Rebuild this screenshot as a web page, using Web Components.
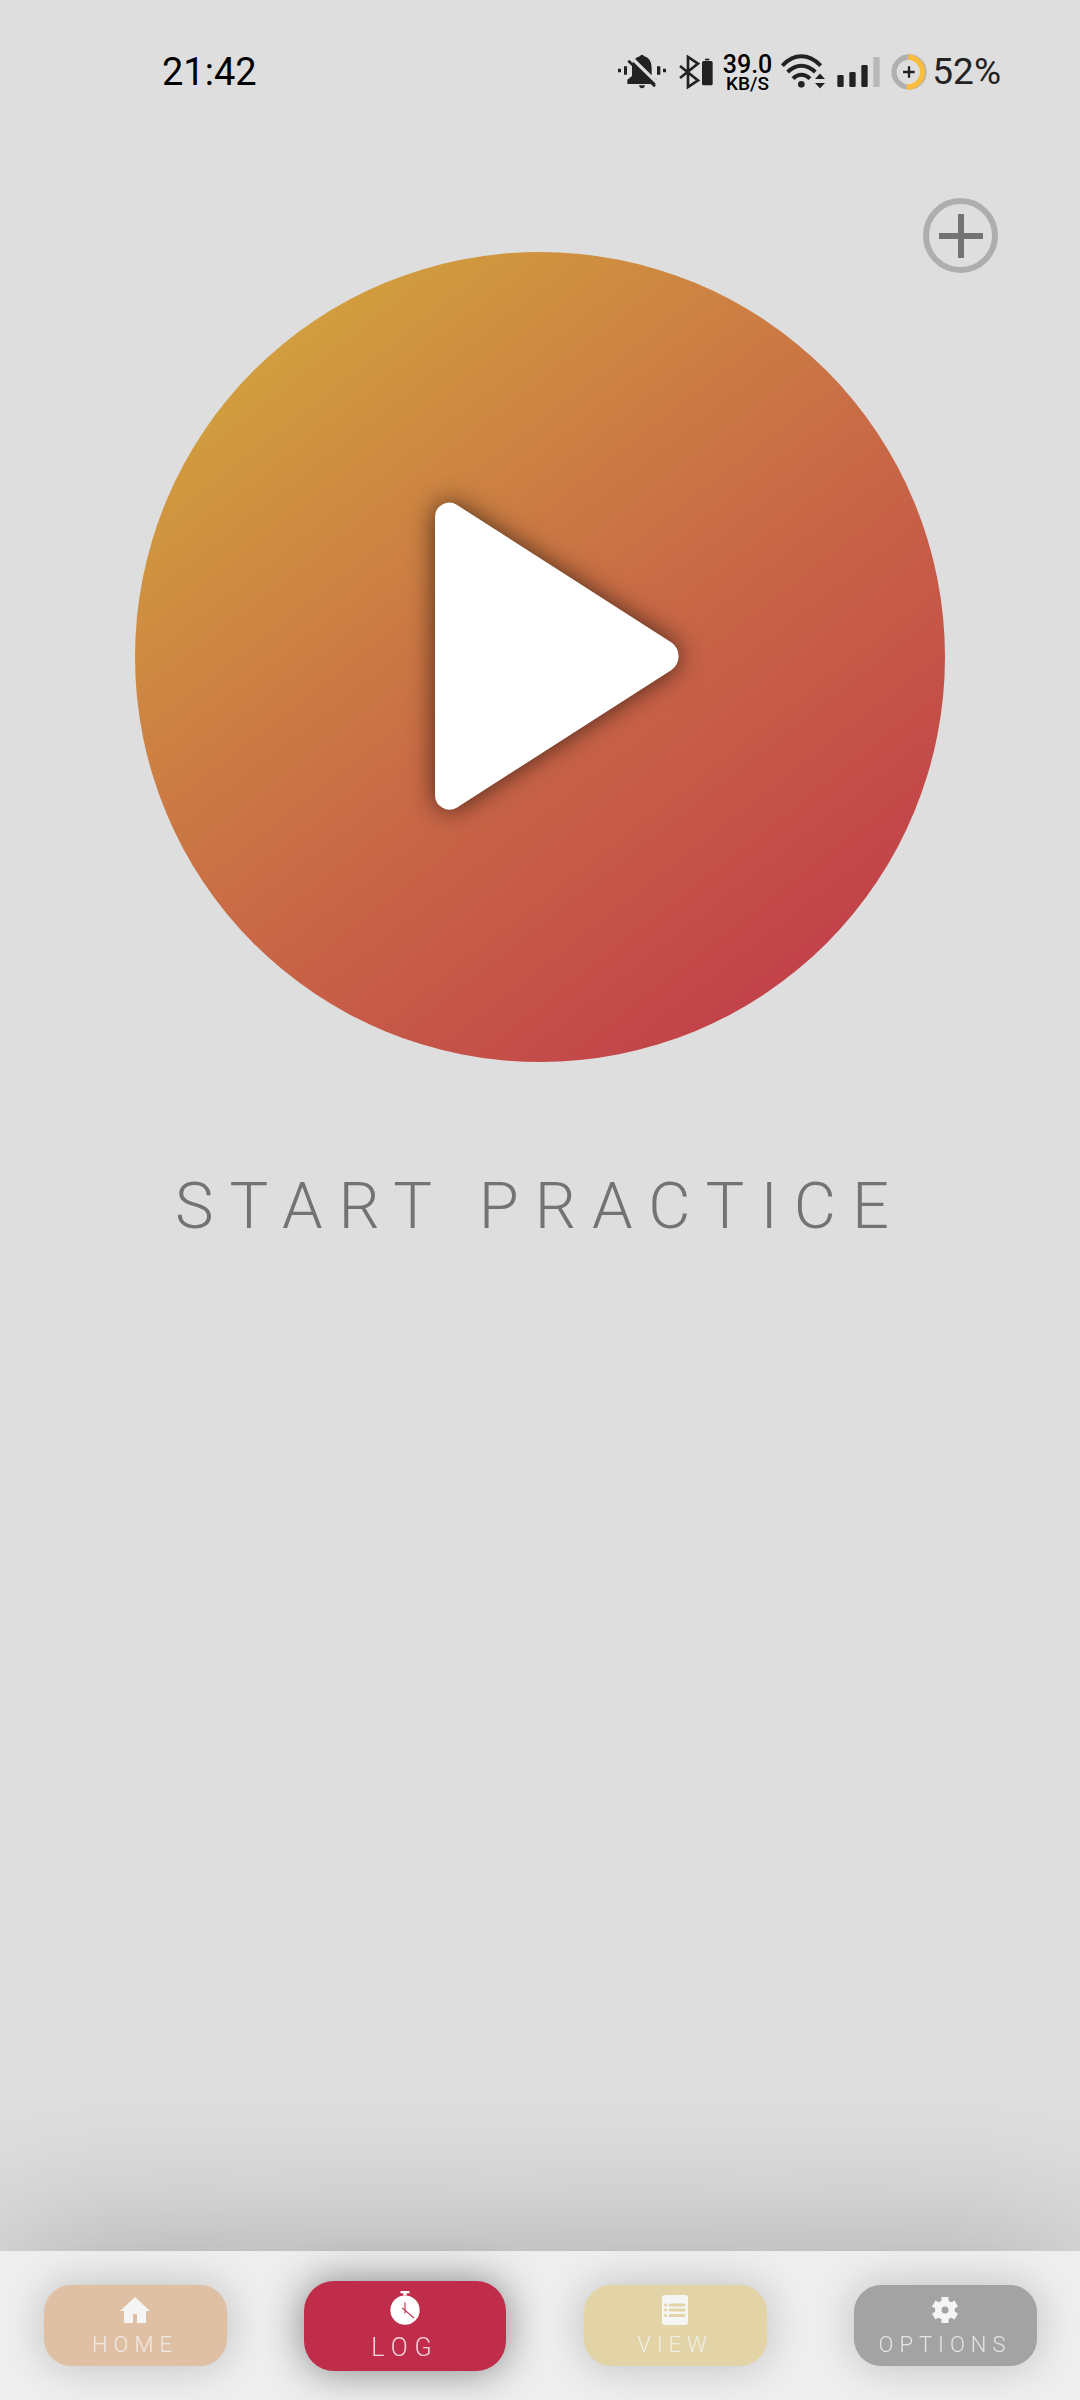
<!DOCTYPE html>
<html lang="en">
<head>
<meta charset="utf-8">
<meta name="viewport" content="width=device-width, initial-scale=1">
<title>Practice Log</title>
<style>
  body { margin: 0; background: #dedede; }
</style>
</head>
<body>
<practice-app></practice-app>

<template id="practice-app">
  <style>
    :host { display: flex; flex-direction: column; min-height: 100vh; background: #dedede; font-family: Roboto, sans-serif; }
    main { flex: 1; position: relative; display: flex; flex-direction: column; align-items: center; padding-top: 152px; }
    add-button { position: absolute; top: 98px; right: 82px; }
    play-button { width: 75%; }
    h1 { margin: 104px 0 0; font-size: 65px; line-height: 80px; font-weight: 300; letter-spacing: 16px; color: #737373; text-align: center; }
  </style>
  <status-bar></status-bar>
  <main>
    <play-button></play-button>
    <add-button></add-button>
    <h1>START PRACTICE</h1>
  </main>
  <tab-bar>
    <tab-item style="--fill:#dfc0a5">
      <svg slot="icon" viewBox="0 0 32 32" width="32" height="32"><path fill="currentColor" d="M16 3 31 17H27V29H18V20H14V29H5V17H1Z"/></svg>HOME</tab-item>
    <tab-item active style="--fill:#c02d4b">
      <svg slot="icon" viewBox="0 0 32 32" width="36" height="36"><path fill="currentColor" d="M12 0H20V2H17.500V4H14.500V2H12Z"/><circle cx="16" cy="17" r="13" fill="currentColor"/><path stroke="#c02d4b" fill="none" d="M16 10V20M13.500 15 24 24"/></svg>LOG</tab-item>
    <tab-item style="--fill:#e2d4a7">
      <svg slot="icon" viewBox="0 0 32 32" width="32" height="32"><rect x="3" y="1" width="26" height="30" rx="3" fill="currentColor"/><path stroke="#e2d4a7" stroke-width="3" stroke-linecap="round" d="M11 11H25M11 16H25M11 21.500H25M6.500 11H6.600M6.500 16H6.600M6.500 21.500H6.600"/></svg>VIEW</tab-item>
    <tab-item style="--fill:#a3a3a3">
      <svg slot="icon" viewBox="0 0 32 32" width="32" height="32"><g fill="currentColor"><circle cx="16" cy="16" r="10"/><path d="M12.500 3H19.500V29H12.500Z"/><path d="M12.500 3H19.500V29H12.500Z" transform="rotate(60 16 16)"/><path d="M12.500 3H19.500V29H12.500Z" transform="rotate(120 16 16)"/></g><circle cx="16" cy="16" r="3.500" fill="#a3a3a3"/></svg>OPTIONS</tab-item>
  </tab-bar>
</template>

<template id="status-bar">
  <style>
    :host { display: flex; align-items: center; justify-content: space-between; box-sizing: border-box; height: 100px; padding: 44px 79px 0 162px; color: #000; }
    time, .level { font-size: 38px; line-height: 58px; }
    .level { font-size: 37px; color: #222; margin-left: 5px; }
    .tray { display: flex; align-items: center; }
    svg { display: block; }
    .bt { margin-left: 13px; }
    .net { display: flex; flex-direction: column; align-items: center; margin: 0 9px 0 10px; padding-top: 4px; font-weight: 500; }
    .rate { font-size: 25px; line-height: 20px; }
    .unit { font-size: 19px; line-height: 18px; }
    .signal, .battery { margin-left: 11px; }
  </style>
  <time datetime="21:42">21:42</time>
  <div class="tray">
    <svg viewBox="54 42 144 108" width="48" height="36" fill="#222">
      <path d="M54 86h9v11h-9zM72 79h9v25h-9zM171 79h10v25h-10zM189 86h9v11h-9z"/>
      <path d="M119 49Q126 39 133 49Q155 56 155 83V108L171 121V132H82V119L96 108V82Q96 56 119 49Z"/>
      <path d="M117 136H135Q133 145 126 145T117 136Z"/>
      <path d="M89 48 179 136" stroke="#dedede" stroke-width="10"/>
      <path d="M76 57H98L90 75Z" fill="#dedede"/>
      <path d="M85 62 165 139" stroke="#222" stroke-width="8"/>
    </svg>
    <svg class="bt" viewBox="237 42 102 108" width="34" height="36">
      <path d="M240 78 294 121 264 141V51L294 71 240 114" fill="none" stroke="#222" stroke-width="8"/>
      <rect x="306" y="63" width="32" height="73" rx="5" fill="#222"/><path fill="#222" d="M315 56h13v5h-13z"/>
    </svg>
    <div class="net"><span class="rate">39.0</span><span class="unit">KB/S</span></div>
    <svg viewBox="36 42 135 108" width="45" height="36">
      <g fill="none" stroke="#222" stroke-width="12"><path d="M40 77Q66 49 97 49T155 77"/><path d="M56 96Q75 77 97 77T139 96"/><path d="M72 116Q83 104 97 104T123 116"/></g>
      <circle cx="97" cy="133" r="10" fill="#222"/>
      <path fill="#222" stroke="#dedede" stroke-width="4" d="M134 119 153 98 172 119ZM134 127H172L153 148Z"/>
    </svg>
    <svg class="signal" viewBox="201 42 129 108" width="43" height="36" fill="#222">
      <rect x="202" y="105" width="19" height="36" rx="4"/><rect x="238" y="96" width="19" height="45" rx="4"/><rect x="274" y="75" width="19" height="66" rx="4"/><rect x="310" y="51" width="19" height="90" rx="4" fill="#b8b8b8"/>
    </svg>
    <svg class="battery" viewBox="362 44 108 108" width="36" height="36" fill="none">
      <circle cx="416" cy="98" r="45" stroke="#b0b0b0" stroke-width="16"/>
      <path d="M414 53A45 45 0 1 1 409 143" stroke="#fbbd40" stroke-width="16"/>
      <path d="M398 98H433M416 81V115" stroke="#222" stroke-width="7"/>
    </svg>
    <span class="level">52%</span>
  </div>
</template>

<template id="add-button">
  <style>
    :host { display: block; }
    button { display: grid; place-items: center; width: 75px; height: 75px; padding: 0; border: 6px solid #aeaeae; border-radius: 50%; background: none; color: #737373; }
  </style>
  <button type="button" aria-label="Add practice"><svg viewBox="0 0 44 44" width="44" height="44"><path d="M0 22H44M22 0V44" stroke="currentColor" stroke-width="6"/></svg></button>
</template>

<template id="play-button">
  <style>
    :host { display: block; }
    button { display: grid; place-items: center; width: 100%; aspect-ratio: 1; padding: 0 18px 2px 52px; border: 0; border-radius: 50%; background: linear-gradient(142deg, #d3aa3c 5%, #c96a46 52%, #be2d4b 104%); }
    svg { width: 33%; overflow: visible; filter: drop-shadow(0 0 13px rgba(0, 0, 0, .65)); }
  </style>
  <button type="button" aria-label="Start practice"><svg viewBox="106 98 730 916"><path fill="#fff" d="M106 141A43 43 0 0 1 172 104L813 515A50 50 0 0 1 813 597L172 1008A43 43 0 0 1 106 972Z"/></svg></button>
</template>

<template id="tab-bar">
  <style>
    :host { display: block; box-shadow: 0 0 160px rgba(0, 0, 0, .26); background: #eee; }
    nav { display: grid; grid-template-columns: repeat(4, 1fr); place-items: center; height: 149px; }
  </style>
  <nav aria-label="Main"><slot></slot></nav>
</template>

<template id="tab-item">
  <style>
    :host { display: block; }
    button { display: flex; flex-direction: column; align-items: center; box-sizing: border-box; width: 183px; height: 81px; padding: 9px 0 0; border: 0; border-radius: 27px; background: var(--fill); box-shadow: 0 0 40px rgba(0, 0, 0, .2); color: #f5f5f5; font: 300 22px/38px Roboto, sans-serif; letter-spacing: 6px; }
    :host([active]) button { width: 202px; height: 90px; padding-top: 10px; border-radius: 30px; box-shadow: 0 0 40px rgba(0, 0, 0, .45); color: #fff; font-size: 25px; line-height: 42px; letter-spacing: 7px; }
    span { opacity: .8; }
  </style>
  <button type="button"><slot name="icon"></slot><span><slot></slot></span></button>
</template>

<script>
  for (const name of ['status-bar', 'add-button', 'play-button', 'tab-item', 'tab-bar', 'practice-app']) {
    const template = document.getElementById(name);
    customElements.define(name, class extends HTMLElement {
      constructor() {
        super();
        this.attachShadow({ mode: 'open' }).append(template.content.cloneNode(true));
      }
    });
  }
</script>
</body>
</html>
